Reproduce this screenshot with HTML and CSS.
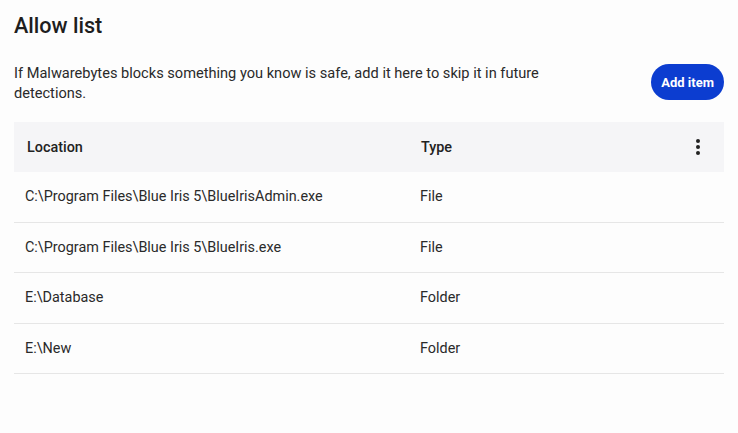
FILE: index.html
```html
<!DOCTYPE html>
<html>
<head>
  <meta charset="UTF-8" />
  <title>Allow list</title>
  <link rel="stylesheet" href="styles.css">
</head>
<body>
  <div class="page">
    <h2 class="title">Allow list</h2>

    <div class="intro">
      <p class="desc">If Malwarebytes blocks something you know is safe, add it here to skip it in future detections.</p>
      <button class="add-btn">Add item</button>
    </div>

    <table class="allow-table">
      <colgroup>
        <col class="col-loc">
        <col class="col-type">
        <col class="col-menu">
      </colgroup>
      <thead>
        <tr>
          <th>Location</th>
          <th>Type</th>
          <th class="menu-cell">
            <svg width="16" height="20" viewBox="0 0 16 20">
              <circle cx="8" cy="4" r="2" fill="#222"/>
              <circle cx="8" cy="10" r="2" fill="#222"/>
              <circle cx="8" cy="16" r="2" fill="#222"/>
            </svg>
          </th>
        </tr>
      </thead>
      <tbody>
        <tr><td>C:\Program Files\Blue Iris 5\BlueIrisAdmin.exe</td><td>File</td><td></td></tr>
        <tr><td>C:\Program Files\Blue Iris 5\BlueIris.exe</td><td>File</td><td></td></tr>
        <tr><td>E:\Database</td><td>Folder</td><td></td></tr>
        <tr><td>E:\New</td><td>Folder</td><td></td></tr>
      </tbody>
    </table>
  </div>
</body>
</html>
```
FILE: styles.css
```css
body {
  margin: 0;
  background: #fdfdfd;
  color: #222;
  font-family: Roboto, 'Noto Sans', sans-serif;
}

.page {
  padding: 12px 14px 0 14px;
}

.title {
  margin: 0;
  font-size: 21.6px;
  font-weight: 500;
  line-height: 28px;
  color: #1e1e1e;
}

.intro {
  display: flex;
  justify-content: space-between;
  align-items: flex-start;
  margin-top: 23px;
}

.desc {
  margin: 0;
  max-width: 560px;
  font-size: 14.6px;
  line-height: 20px;
  color: #2a2a2a;
}

.add-btn {
  margin-top: 1px;
  height: 36px;
  padding: 0 10px;
  border: none;
  border-radius: 18px;
  background: #0c3dd0;
  color: #fff;
  font-family: Roboto, sans-serif;
  font-size: 13px;
  font-weight: 700;
  cursor: pointer;
}

.allow-table {
  width: 100%;
  margin-top: 19px;
  border-collapse: collapse;
  table-layout: fixed;
  font-size: 14.4px;
}

.col-loc {
  width: 400px;
}

.col-menu {
  width: 50px;
}

.allow-table th {
  height: 50px;
  padding: 0 13px;
  background: #f5f5f7;
  text-align: left;
  font-weight: 500;
  color: #222;
}

.allow-table th:nth-child(2) {
  padding-left: 7px;
}

.allow-table th.menu-cell {
  padding: 0 18px 0 0;
}

.allow-table th svg {
  display: block;
  margin-left: auto;
}

.allow-table td {
  height: 49.6px;
  padding: 0 11px;
  border-bottom: 1px solid #e6e6e6;
  color: #2a2a2a;
}

.allow-table td:nth-child(2) {
  padding-left: 6px;
}
```
